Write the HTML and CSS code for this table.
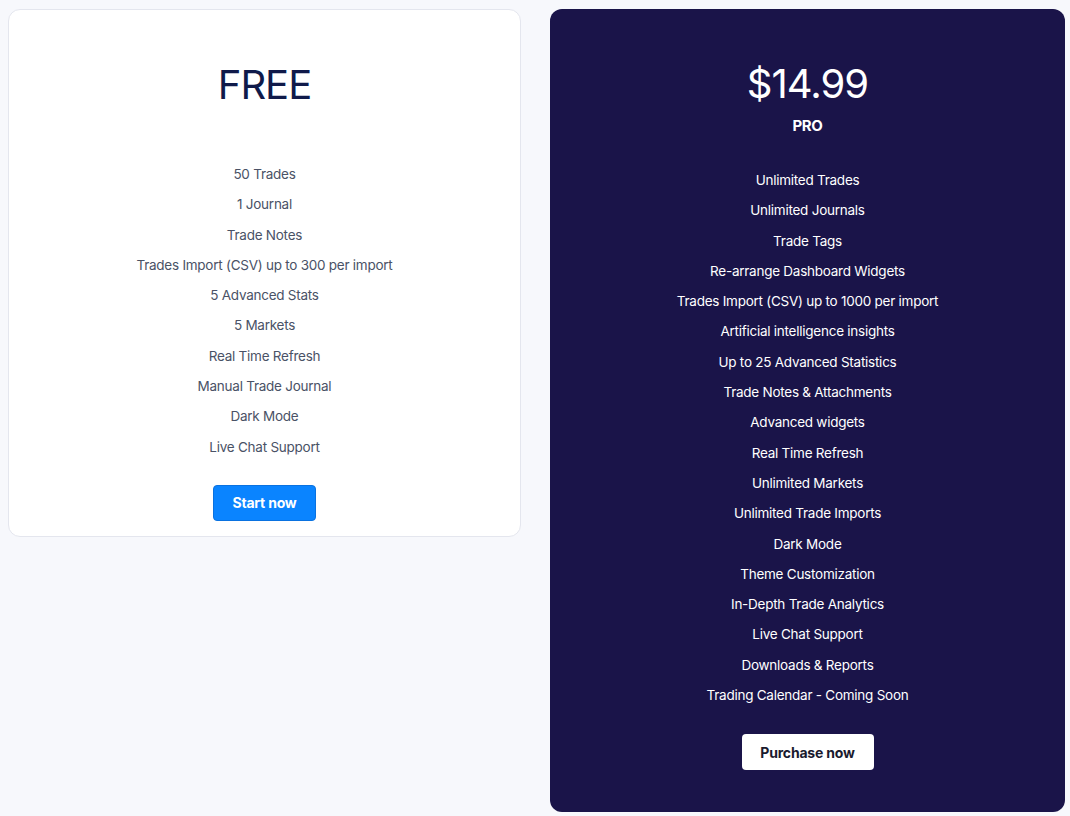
FILE: index.html
```html
<!DOCTYPE html>
<html>
<head>
<meta charset="utf-8">
<link rel="stylesheet" href="styles.css">
</head>
<body>
<div class="plans">
  <div class="card card-free">
    <div class="price">FREE</div>
    <div class="tier"></div>
    <ul class="features">
      <li>50 Trades</li>
      <li>1 Journal</li>
      <li>Trade Notes</li>
      <li>Trades Import (CSV) up to 300 per import</li>
      <li>5 Advanced Stats</li>
      <li>5 Markets</li>
      <li>Real Time Refresh</li>
      <li>Manual Trade Journal</li>
      <li>Dark Mode</li>
      <li>Live Chat Support</li>
    </ul>
    <button class="btn btn-blue">Start now</button>
  </div>
  <div class="card card-pro">
    <div class="price">$14.99</div>
    <div class="tier">PRO</div>
    <ul class="features">
      <li>Unlimited Trades</li>
      <li>Unlimited Journals</li>
      <li>Trade Tags</li>
      <li>Re-arrange Dashboard Widgets</li>
      <li>Trades Import (CSV) up to 1000 per import</li>
      <li>Artificial intelligence insights</li>
      <li>Up to 25 Advanced Statistics</li>
      <li>Trade Notes &amp; Attachments</li>
      <li>Advanced widgets</li>
      <li>Real Time Refresh</li>
      <li>Unlimited Markets</li>
      <li>Unlimited Trade Imports</li>
      <li>Dark Mode</li>
      <li>Theme Customization</li>
      <li>In-Depth Trade Analytics</li>
      <li>Live Chat Support</li>
      <li>Downloads &amp; Reports</li>
      <li>Trading Calendar - Coming Soon</li>
    </ul>
    <button class="btn btn-white">Purchase now</button>
  </div>
</div>
</body>
</html>
```
FILE: styles.css
```css
html, body {
  margin: 0;
  padding: 0;
  background: #f7f8fc;
  font-family: Inter, "Noto Sans", sans-serif;
}
.plans {
  display: grid;
  grid-template-columns: 513px 515px;
  column-gap: 29px;
  align-items: start;
  padding: 9px 5px 0 8px;
}
.card {
  box-sizing: border-box;
  border-radius: 12px;
  display: flex;
  flex-direction: column;
  align-items: center;
  padding-top: 50px;
}
.card-free {
  background: #ffffff;
  border: 1px solid #e4e6ee;
  height: 528px;
  color: #4a5266;
}
.card-pro {
  background: #1a1449;
  height: 803px;
  color: #ffffff;
}
.price {
  font-size: 40px;
  line-height: 50px;
  font-weight: 400;
  letter-spacing: -1px;
}
.card-free .price {
  color: #101a4a;
}
.tier {
  margin-top: 2px;
  font-size: 15px;
  font-weight: 700;
  line-height: 30px;
  height: 30px;
  letter-spacing: -0.3px;
}
.features {
  list-style: none;
  margin: 0;
  padding: 0;
  text-align: center;
  font-size: 13.5px;
  letter-spacing: -0.25px;
  line-height: 30.3px;
}
.card-free .features {
  margin-top: 17px;
}
.card-pro .features {
  margin-top: 24px;
}
.btn {
  height: 36px;
  border-radius: 4px;
  font-family: inherit;
  font-size: 14px;
  font-weight: 700;
  border: none;
  cursor: pointer;
  letter-spacing: -0.2px;
}
.btn-blue {
  margin-top: 23px;
  width: 103px;
  background: #0a84ff;
  color: #ffffff;
  border: 1px solid #0a72e0;
}
.btn-white {
  margin-top: 24px;
  width: 132px;
  background: #ffffff;
  color: #1a1a2e;
}
```
